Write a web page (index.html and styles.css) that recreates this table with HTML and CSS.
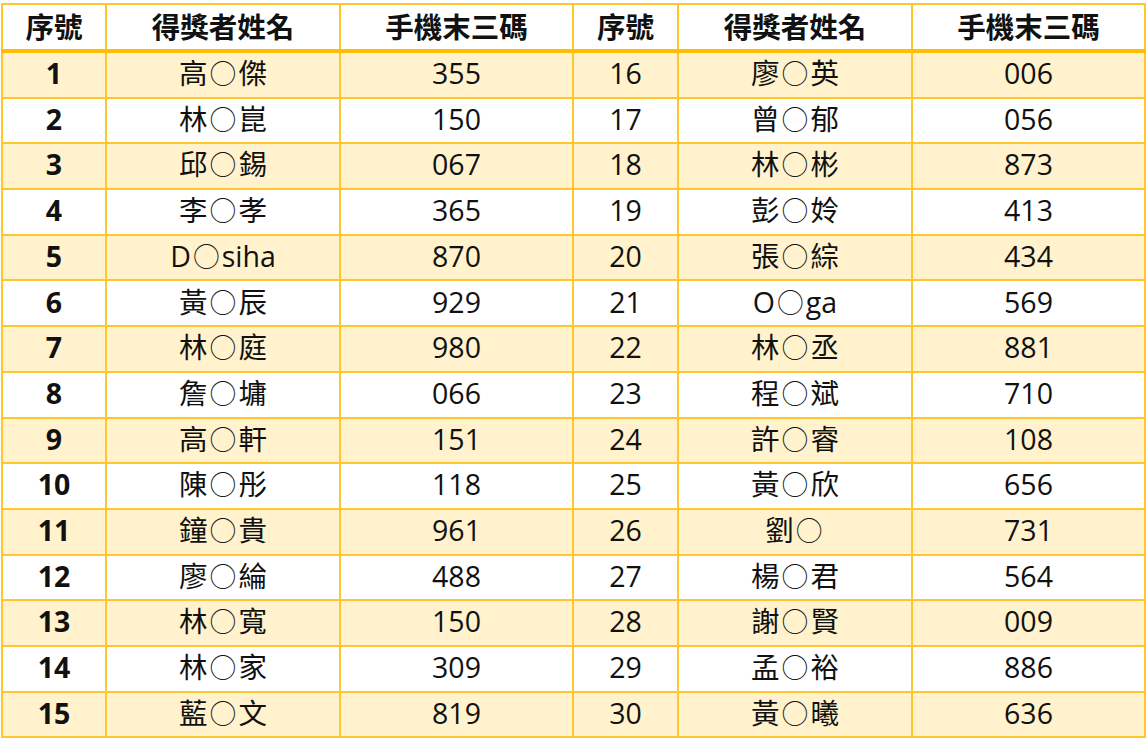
FILE: index.html
```html
<!DOCTYPE html>
<html lang="zh-Hant">
<head>
<meta charset="utf-8">
<link rel="stylesheet" href="styles.css">
</head>
<body>
<table class="winners">
<colgroup>
<col class="c-no"><col class="c-name"><col class="c-phone"><col class="c-no2"><col class="c-name"><col class="c-phone">
</colgroup>
<thead>
<tr><th>序號</th><th>得獎者姓名</th><th>手機末三碼</th><th>序號</th><th>得獎者姓名</th><th>手機末三碼</th></tr>
</thead>
<tbody>
<tr><td class="n">1</td><td>高<span class="mask">○</span>傑</td><td>355</td><td>16</td><td>廖<span class="mask">○</span>英</td><td>006</td></tr>
<tr><td class="n">2</td><td>林<span class="mask">○</span>崑</td><td>150</td><td>17</td><td>曾<span class="mask">○</span>郁</td><td>056</td></tr>
<tr><td class="n">3</td><td>邱<span class="mask">○</span>錫</td><td>067</td><td>18</td><td>林<span class="mask">○</span>彬</td><td>873</td></tr>
<tr><td class="n">4</td><td>李<span class="mask">○</span>孝</td><td>365</td><td>19</td><td>彭<span class="mask">○</span>姈</td><td>413</td></tr>
<tr><td class="n">5</td><td>D<span class="mask">○</span>siha</td><td>870</td><td>20</td><td>張<span class="mask">○</span>綜</td><td>434</td></tr>
<tr><td class="n">6</td><td>黃<span class="mask">○</span>辰</td><td>929</td><td>21</td><td>O<span class="mask">○</span>ga</td><td>569</td></tr>
<tr><td class="n">7</td><td>林<span class="mask">○</span>庭</td><td>980</td><td>22</td><td>林<span class="mask">○</span>丞</td><td>881</td></tr>
<tr><td class="n">8</td><td>詹<span class="mask">○</span>墉</td><td>066</td><td>23</td><td>程<span class="mask">○</span>斌</td><td>710</td></tr>
<tr><td class="n">9</td><td>高<span class="mask">○</span>軒</td><td>151</td><td>24</td><td>許<span class="mask">○</span>睿</td><td>108</td></tr>
<tr><td class="n">10</td><td>陳<span class="mask">○</span>彤</td><td>118</td><td>25</td><td>黃<span class="mask">○</span>欣</td><td>656</td></tr>
<tr><td class="n">11</td><td>鐘<span class="mask">○</span>貴</td><td>961</td><td>26</td><td>劉<span class="mask">○</span></td><td>731</td></tr>
<tr><td class="n">12</td><td>廖<span class="mask">○</span>綸</td><td>488</td><td>27</td><td>楊<span class="mask">○</span>君</td><td>564</td></tr>
<tr><td class="n">13</td><td>林<span class="mask">○</span>寬</td><td>150</td><td>28</td><td>謝<span class="mask">○</span>賢</td><td>009</td></tr>
<tr><td class="n">14</td><td>林<span class="mask">○</span>家</td><td>309</td><td>29</td><td>孟<span class="mask">○</span>裕</td><td>886</td></tr>
<tr><td class="n">15</td><td>藍<span class="mask">○</span>文</td><td>819</td><td>30</td><td>黃<span class="mask">○</span>曦</td><td>636</td></tr>
</tbody>
</table>
</body>
</html>
```
FILE: styles.css
```css
html, body {
  margin: 0;
  padding: 0;
  background: #ffffff;
}
body {
  padding: 3px 0 0 1px;
}
.winners {
  border-collapse: collapse;
  table-layout: fixed;
  width: 1143px;
  font-family: "Open Sans", "Noto Sans CJK TC", sans-serif;
  font-size: 28.5px;
  color: #111111;
}
.c-no { width: 104px; }
.c-name { width: 234px; }
.c-phone { width: 233px; }
.c-no2 { width: 105px; }
.winners th,
.winners td {
  border: 2px solid #ffc72c;
  text-align: center;
  vertical-align: middle;
  padding: 0;
  line-height: 1;
  white-space: nowrap;
}
.winners th {
  height: 44px;
  font-weight: 700;
  background: #ffffff;
  border-bottom: 4px solid #ffbf00;
}
.winners td {
  height: 40.7px;
  padding-bottom: 3px;
  font-weight: 400;
}
.winners td.n {
  font-weight: 700;
}
.winners tbody tr:nth-child(odd) td {
  background: #fff2cc;
}
.mask {
  display: inline-block;
  font-family: "Noto Sans CJK TC", sans-serif;
  font-weight: 300;
  font-size: 0.94em;
  margin: 0 2px;
  vertical-align: 0;
}
```
